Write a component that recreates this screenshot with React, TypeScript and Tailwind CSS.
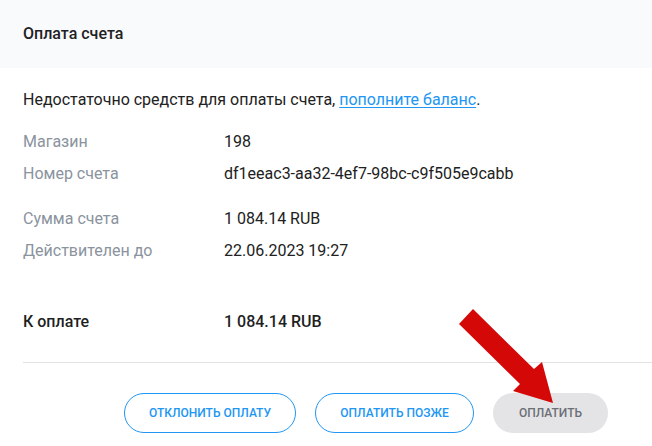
import React from "react";

const rows1 = [
  { label: "Магазин", value: "198" },
  { label: "Номер счета", value: "df1eeac3-aa32-4ef7-98bc-c9f505e9cabb" },
];

const rows2 = [
  { label: "Сумма счета", value: "1 084.14 RUB" },
  { label: "Действителен до", value: "22.06.2023 19:27" },
];

function Row({ label, value, strong }: { label: string; value: string; strong?: boolean }) {
  return (
    <div className="flex h-8 items-center text-[16px]">
      <div className={`w-[201px] shrink-0 ${strong ? "font-medium text-[#1f1f1f]" : "text-[#8a939e]"}`}>{label}</div>
      <div className={strong ? "font-medium text-[#1f1f1f]" : "text-[#212121]"}>{value}</div>
    </div>
  );
}

export default function App() {
  return (
    <div className="relative w-[652px] h-[446px] overflow-hidden bg-white font-['Roboto','Liberation_Sans',sans-serif]">
      {/* Header */}
      <div className="h-[68px] bg-[#f8fafc] px-[23px] flex items-center">
        <h3 className="text-[16px] font-medium text-[#1f2124]">Оплата счета</h3>
      </div>

      {/* Body */}
      <div className="pl-[23px] pt-[20px]">
        <p className="text-[16px] leading-6 text-[#212121]">
          Недостаточно средств для оплаты счета,{" "}
          <a href="#" className="text-[#2196f3] underline underline-offset-2">
            пополните баланс
          </a>
          .
        </p>

        <div className="mt-[14px]">
          {rows1.map((r) => (
            <Row key={r.label} {...r} />
          ))}
        </div>
        <div className="mt-[13px]">
          {rows2.map((r) => (
            <Row key={r.label} {...r} />
          ))}
        </div>
        <div className="mt-[39px]">
          <Row label="К оплате" value="1 084.14 RUB" strong />
        </div>

        <div className="mt-[24px] h-px bg-[#e3e3e3]" />

        {/* Actions */}
        <div className="mt-[30px] flex justify-end gap-[19px] pr-[44px]">
          <button className="h-10 w-[172px] rounded-full border border-[#2196f3] text-[12px] font-medium uppercase text-[#2196f3]">
            Отклонить оплату
          </button>
          <button className="h-10 w-[159px] rounded-full border border-[#2196f3] text-[12px] font-medium uppercase text-[#2196f3]">
            Оплатить позже
          </button>
          <button className="h-10 w-[115px] rounded-full bg-[#e4e4e6] text-[12px] font-medium uppercase text-[#6b6f76]">
            Оплатить
          </button>
        </div>
      </div>

      {/* Red pointer arrow overlay */}
      <svg className="pointer-events-none absolute inset-0" width="652" height="446" viewBox="0 0 652 446">
        <polygon
          points="473,309 534,369 542,362 553,403 513,391 520,384 459,324"
          fill="#d50808"
        />
      </svg>
    </div>
  );
}
